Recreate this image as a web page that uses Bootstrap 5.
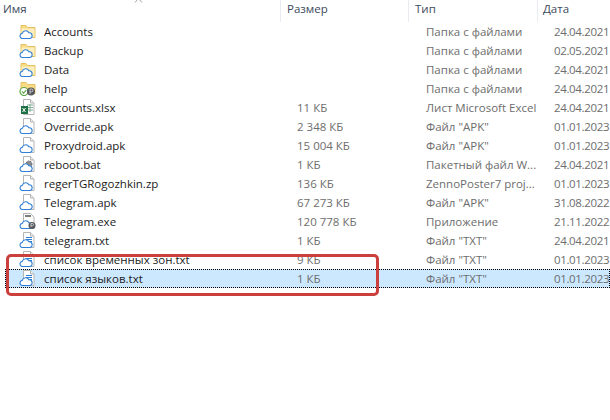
<!DOCTYPE html>
<html lang="en">

<head>
  <meta charset="UTF-8" />
  <meta name="viewport" content="width=device-width, initial-scale=1.0" />
  <title>Explorer</title>
  <link href="https://cdn.jsdelivr.net/npm/bootstrap@5.3.0/dist/css/bootstrap.min.css" rel="stylesheet" />
  <style>
    body {
      background: #fff;
      font-family: "Open Sans", "Noto Sans", sans-serif;
      font-size: 11.5px;
      overflow: hidden;
    }

    .explorer {
      width: 610px;
      height: 420px;
    }

    .sort-mark {
      top: -3px;
      left: 134px;
    }

    .head-row {
      height: 22px;
      color: #3c4a5c;
    }

    .head-cell {
      line-height: 18px;
      border-right: 1px solid #e8ebef;
      height: 22px;
    }

    .head-name {
      width: 281px;
      padding-left: 3px;
    }

    .head-size {
      width: 128px;
      padding-left: 6px;
    }

    .head-type {
      width: 129px;
      padding-left: 6px;
    }

    .head-date {
      padding-left: 5px;
      border: 0;
    }

    .file-list {
      padding-left: 5px;
    }

    .file-row {
      height: 19px;
      line-height: 19px;
      white-space: nowrap;
    }

    .file-row.selected {
      background: #cce8ff;
      outline: 1px dotted #000;
      outline-offset: -1px;
    }

    .cell-icon {
      width: 39px;
      padding-left: 14px;
    }

    .cell-icon svg {
      display: block;
      margin-top: 1px;
    }

    .cell-name {
      width: 253px;
      color: #1c1c1c;
    }

    .cell-size {
      width: 129px;
      color: #6d6d6d;
    }

    .cell-type {
      width: 128px;
      color: #6d6d6d;
    }

    .cell-date {
      color: #6d6d6d;
      letter-spacing: -0.35px;
    }

    .red-box {
      left: 6px;
      top: 254px;
      width: 373px;
      height: 42px;
      border: 3px solid #cb3f3d;
      border-radius: 5px;
    }
  </style>
</head>

<body>
  <svg width="0" height="0" class="d-block">
    <defs>
      <g id="cloud">
        <path d="M3 15.500a2.600 2.600 0 0 1 .2-5.100 3.600 3.600 0 0 1 6.700-.6 2.900 2.900 0 0 1 1 5.700z" fill="#fff" stroke="#2f7fd6" stroke-width="1.100" />
      </g>
      <g id="folder">
        <path d="M2 2.500h5l1.500 2h7.500v10H2z" fill="#f9dc85" stroke="#e3c063" stroke-width="1" />
        <path d="M2.500 5.500h13v8.500h-13z" fill="#fdefbd" />
        <use href="#cloud" />
      </g>
      <g id="page">
        <path d="M4.500 .5h7l3.500 3.500v11.500h-10.500z" fill="#fff" stroke="#b5b5b5" stroke-width="1" />
        <path d="M11.500 .5v3.500h3.500" fill="#eee" stroke="#b5b5b5" stroke-width="1" />
      </g>
      <g id="apk">
        <use href="#page" />
        <use href="#cloud" />
      </g>
      <g id="txt">
        <use href="#page" />
        <path d="M7 5.500h6M7 7.500h6M9 9.500h4M11 11.500h2" stroke="#2f7fd6" stroke-width="1" />
        <use href="#cloud" />
      </g>
      <g id="bat">
        <use href="#page" />
        <circle cx="10" cy="8" r="3" fill="#8d8d8d" stroke="#666" stroke-dasharray="1.500 1" />
        <use href="#cloud" />
      </g>
      <g id="xlsx">
        <use href="#page" />
        <path d="M8 6h6M8 8.500h6M8 11h6M11 5v8" stroke="#7fae93" stroke-width="1" />
        <rect x="2" y="7" width="7" height="8" fill="#1e7145" />
        <path d="M3.500 9l3 4M6.500 9l-3 4" stroke="#fff" stroke-width="1" />
      </g>
      <g id="exe">
        <path d="M4.500 .5h7l3.500 3.500v11.500h-10.500z" fill="#fff" stroke="#b5b5b5" stroke-width="1" />
        <rect x="6" y="2" width="6" height="2" fill="#7d7d7d" />
        <use href="#cloud" />
        <circle cx="13" cy="12.500" r="3.500" fill="#55585c" />
        <path d="M12 14v-3.500h1.500a1 1 0 0 1 0 2.200h-1.500" fill="none" stroke="#ddd" stroke-width=".8" />
      </g>
      <g id="help">
        <path d="M2 2.500h5l1.500 2h7.500v9H2z" fill="#f9dc85" stroke="#e3c063" stroke-width="1" />
        <circle cx="5" cy="11.500" r="4" fill="#fff" stroke="#5aa845" stroke-width="1.200" />
        <path d="M3 11.500l1.600 1.600 2.600-3" fill="none" stroke="#5aa845" stroke-width="1.100" />
        <circle cx="12" cy="11.500" r="4" fill="#55585c" />
        <path d="M11 14v-5h1.500a1.300 1.300 0 0 1 0 2.800h-1.500" fill="none" stroke="#ddd" stroke-width=".8" />
      </g>
    </defs>
  </svg>

  <div class="explorer position-relative">
    <svg class="sort-mark position-absolute" width="9" height="6" viewBox="0 0 9 6">
      <path d="M1 5.500l3.500-4 3.500 4" fill="none" stroke="#9aa0a6" stroke-width="1" />
    </svg>

    <div class="head-row d-flex">
      <div class="head-cell head-name">Имя</div>
      <div class="head-cell head-size">Размер</div>
      <div class="head-cell head-type">Тип</div>
      <div class="head-cell head-date">Дата</div>
    </div>

    <div class="file-list">
      <div class="file-row d-flex">
        <div class="cell-icon"><svg width="18" height="16"><use href="#folder" /></svg></div>
        <div class="cell-name">Accounts</div>
        <div class="cell-size"></div>
        <div class="cell-type">Папка с файлами</div>
        <div class="cell-date">24.04.2021</div>
      </div>
      <div class="file-row d-flex">
        <div class="cell-icon"><svg width="18" height="16"><use href="#folder" /></svg></div>
        <div class="cell-name">Backup</div>
        <div class="cell-size"></div>
        <div class="cell-type">Папка с файлами</div>
        <div class="cell-date">02.05.2021</div>
      </div>
      <div class="file-row d-flex">
        <div class="cell-icon"><svg width="18" height="16"><use href="#folder" /></svg></div>
        <div class="cell-name">Data</div>
        <div class="cell-size"></div>
        <div class="cell-type">Папка с файлами</div>
        <div class="cell-date">24.04.2021</div>
      </div>
      <div class="file-row d-flex">
        <div class="cell-icon"><svg width="18" height="16"><use href="#help" /></svg></div>
        <div class="cell-name">help</div>
        <div class="cell-size"></div>
        <div class="cell-type">Папка с файлами</div>
        <div class="cell-date">24.04.2021</div>
      </div>
      <div class="file-row d-flex">
        <div class="cell-icon"><svg width="18" height="16"><use href="#xlsx" /></svg></div>
        <div class="cell-name">accounts.xlsx</div>
        <div class="cell-size">11 КБ</div>
        <div class="cell-type">Лист Microsoft Excel</div>
        <div class="cell-date">24.04.2021</div>
      </div>
      <div class="file-row d-flex">
        <div class="cell-icon"><svg width="18" height="16"><use href="#apk" /></svg></div>
        <div class="cell-name">Override.apk</div>
        <div class="cell-size">2 348 КБ</div>
        <div class="cell-type">Файл "APK"</div>
        <div class="cell-date">01.01.2023</div>
      </div>
      <div class="file-row d-flex">
        <div class="cell-icon"><svg width="18" height="16"><use href="#apk" /></svg></div>
        <div class="cell-name">Proxydroid.apk</div>
        <div class="cell-size">15 004 КБ</div>
        <div class="cell-type">Файл "APK"</div>
        <div class="cell-date">01.01.2023</div>
      </div>
      <div class="file-row d-flex">
        <div class="cell-icon"><svg width="18" height="16"><use href="#bat" /></svg></div>
        <div class="cell-name">reboot.bat</div>
        <div class="cell-size">1 КБ</div>
        <div class="cell-type">Пакетный файл W...</div>
        <div class="cell-date">24.04.2021</div>
      </div>
      <div class="file-row d-flex">
        <div class="cell-icon"><svg width="18" height="16"><use href="#apk" /></svg></div>
        <div class="cell-name">regerTGRogozhkin.zp</div>
        <div class="cell-size">136 КБ</div>
        <div class="cell-type">ZennoPoster7 proj...</div>
        <div class="cell-date">01.01.2023</div>
      </div>
      <div class="file-row d-flex">
        <div class="cell-icon"><svg width="18" height="16"><use href="#apk" /></svg></div>
        <div class="cell-name">Telegram.apk</div>
        <div class="cell-size">67 273 КБ</div>
        <div class="cell-type">Файл "APK"</div>
        <div class="cell-date">31.08.2022</div>
      </div>
      <div class="file-row d-flex">
        <div class="cell-icon"><svg width="18" height="16"><use href="#exe" /></svg></div>
        <div class="cell-name">Telegram.exe</div>
        <div class="cell-size">120 778 КБ</div>
        <div class="cell-type">Приложение</div>
        <div class="cell-date">21.11.2022</div>
      </div>
      <div class="file-row d-flex">
        <div class="cell-icon"><svg width="18" height="16"><use href="#txt" /></svg></div>
        <div class="cell-name">telegram.txt</div>
        <div class="cell-size">1 КБ</div>
        <div class="cell-type">Файл "TXT"</div>
        <div class="cell-date">24.04.2021</div>
      </div>
      <div class="file-row d-flex">
        <div class="cell-icon"><svg width="18" height="16"><use href="#txt" /></svg></div>
        <div class="cell-name">список временных зон.txt</div>
        <div class="cell-size">9 КБ</div>
        <div class="cell-type">Файл "TXT"</div>
        <div class="cell-date">01.01.2023</div>
      </div>
      <div class="file-row selected d-flex">
        <div class="cell-icon"><svg width="18" height="16"><use href="#txt" /></svg></div>
        <div class="cell-name">список языков.txt</div>
        <div class="cell-size">1 КБ</div>
        <div class="cell-type">Файл "TXT"</div>
        <div class="cell-date">01.01.2023</div>
      </div>
    </div>

    <div class="red-box position-absolute"></div>
  </div>

  <script src="https://cdn.jsdelivr.net/npm/bootstrap@5.3.0/dist/js/bootstrap.bundle.min.js"></script>
</body>

</html>
